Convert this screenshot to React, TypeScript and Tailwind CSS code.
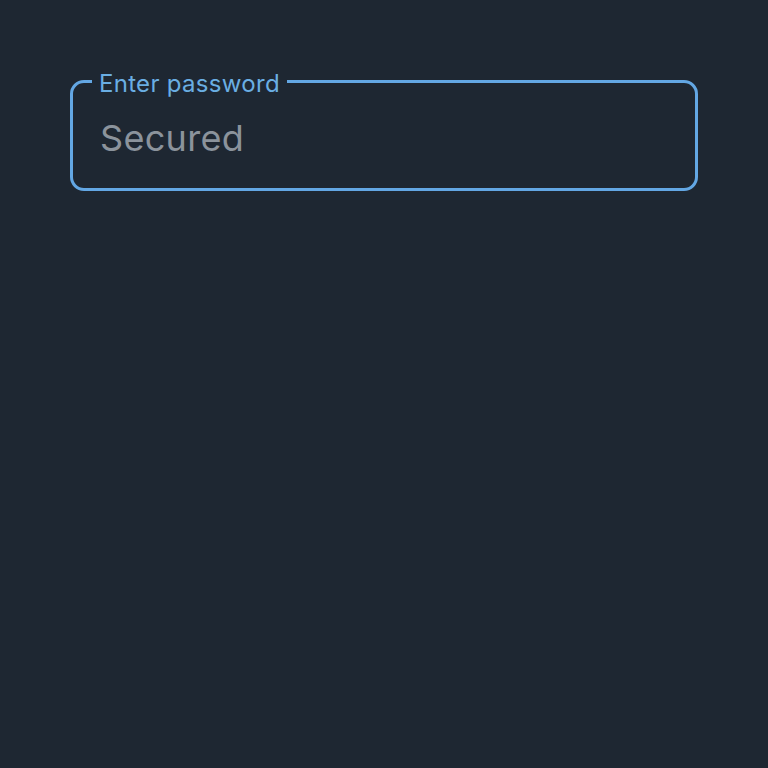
export default function App() {
  return (
    <div className="w-[768px] h-[768px] bg-[#1e2732] pt-[67px] px-[70px]" style={{ fontFamily: "Inter, 'Noto Sans', sans-serif" }}>
      <fieldset className="border-[3px] border-[#63a7e4] rounded-[14px] h-[124px] pl-[19px] pr-4 m-0">
        <legend className="px-[7px] pt-[5px] text-[24px] leading-[24px] tracking-[0.3px] text-[#6aaee3]">Enter password</legend>
        <div className="pt-[22px] pl-[8px] text-[36px] leading-[40px] tracking-[0.3px] text-[#8b939c]">Secured</div>
      </fieldset>
    </div>
  );
}
